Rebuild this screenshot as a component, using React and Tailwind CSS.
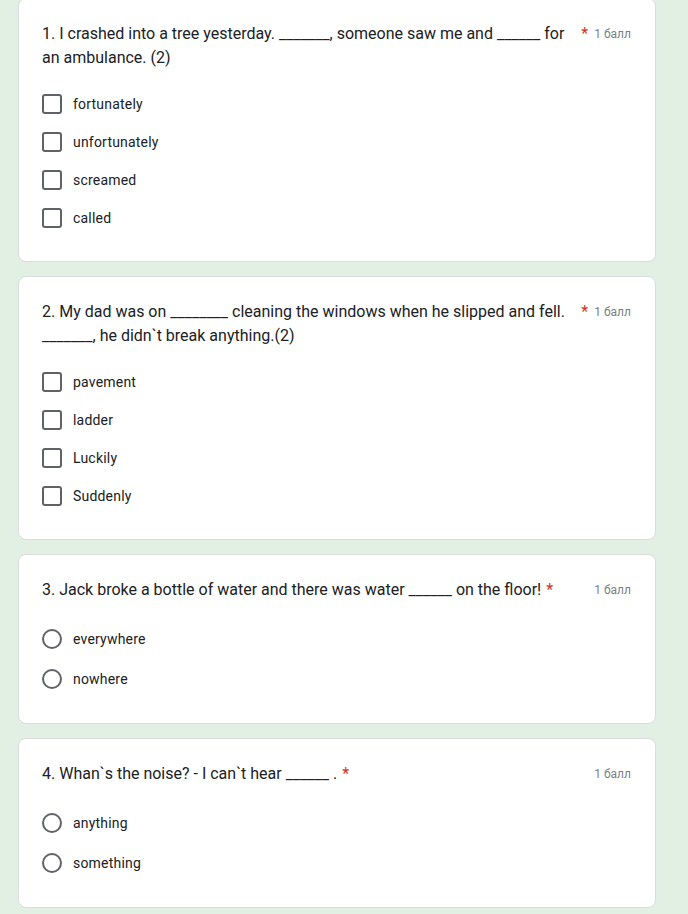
const questions = [
  {
    title: "1. I crashed into a tree yesterday. _______, someone saw me and ______ for an ambulance. (2)",
    type: "checkbox",
    options: ["fortunately", "unfortunately", "screamed", "called"],
  },
  {
    title: "2. My dad was on ________ cleaning the windows when he slipped and fell. _______, he didn`t break anything.(2)",
    type: "checkbox",
    options: ["pavement", "ladder", "Luckily", "Suddenly"],
  },
  {
    title: "3. Jack broke a bottle of water and there was water ______ on the floor!",
    type: "radio",
    options: ["everywhere", "nowhere"],
  },
  {
    title: "4. Whan`s the noise? - I can`t hear ______ .",
    type: "radio",
    options: ["anything", "something"],
  },
];

function Option({ type, label }) {
  const isRadio = type === "radio";
  return (
    <div className={`flex items-center ${isRadio ? "h-[40px]" : "h-[38px]"}`}>
      <span
        className={
          isRadio
            ? "w-[20px] h-[20px] rounded-full border-2 border-[#5f6368] shrink-0"
            : "w-[20px] h-[20px] rounded-[3px] border-2 border-[#5f6368] shrink-0"
        }
      />
      <span className="ml-[11px] text-[14px] tracking-[0.2px] text-[#202124]">{label}</span>
    </div>
  );
}

function Question({ q, first }) {
  const isRadio = q.type === "radio";
  return (
    <div
      className={`bg-white border border-[#dadce0] rounded-lg pt-[23px] pb-[24px] pl-[23px] pr-[24px] ${
        first ? "-mt-[2px]" : "mt-[14px]"
      }`}
    >
      <div className="flex items-start">
        <div className="min-w-0 text-[16px] leading-[24px] text-[#202124]">{q.title}</div>
        <span className="pl-[5px] text-[16px] leading-[24px] text-[#d93025] shrink-0">*</span>
        <span className="ml-auto pl-[6px] text-[12px] leading-[24px] text-[#7b7f84] shrink-0 whitespace-nowrap">
          1 балл
        </span>
      </div>
      <div className={isRadio ? "mt-[17px]" : "mt-[15px]"}>
        {q.options.map((o) => (
          <Option key={o} type={q.type} label={o} />
        ))}
      </div>
    </div>
  );
}

export default function App() {
  return (
    <div
      className="min-h-[914px] bg-[#e1f0e2] pl-[18px] pr-[32px] overflow-hidden"
      style={{ fontFamily: "Roboto, 'Liberation Sans', sans-serif" }}
    >
      {questions.map((q, i) => (
        <Question key={i} q={q} first={i === 0} />
      ))}
    </div>
  );
}
